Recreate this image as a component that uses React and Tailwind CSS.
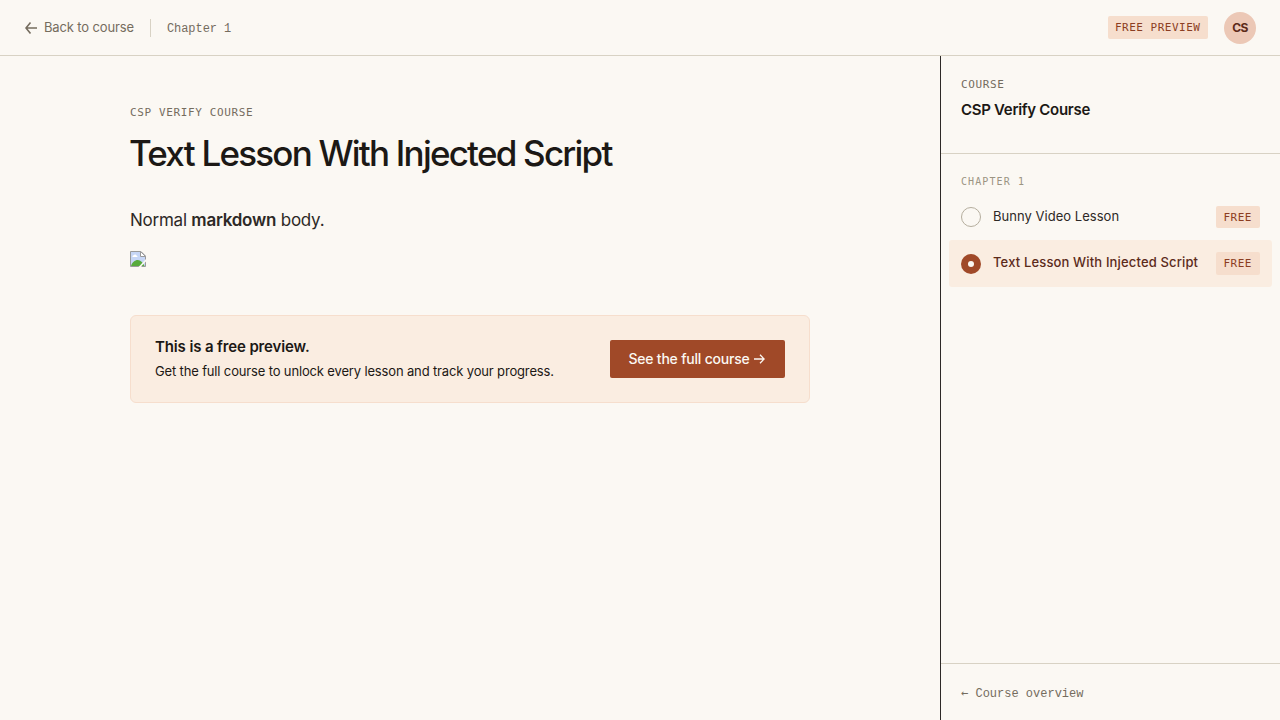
import clsx from 'clsx'

const lessons = [
  { id: 1, title: 'Bunny Video Lesson', free: true },
  { id: 2, title: 'Text Lesson With Injected Script', free: true, current: true },
]

function ArrowLeft() {
  return (
    <svg width="12" height="12" viewBox="0 0 12 12" fill="none" stroke="currentColor" strokeWidth="1.6" className="shrink-0">
      <path d="M12 6H1M5.500.6 1 6l4.500 5.400" />
    </svg>
  )
}

function ArrowRight() {
  return (
    <svg width="11" height="10" viewBox="0 0 11 10" fill="none" stroke="currentColor" strokeWidth="1.3" className="shrink-0">
      <path d="M0 5h10M6 .8 10.2 5 6 9.2" />
    </svg>
  )
}

function MissingImage() {
  return (
    <svg width="16" height="16" viewBox="0 0 16 16" className="block">
      <path d="M.5.5h10.500l4.500 4.500v10.500H.5z" fill="#c6d6f6" stroke="#9a9a9a" />
      <path d="M2.500 6a1.300 1.300 0 0 1 1.200-1.700 1.700 1.700 0 0 1 3 .5A1 1 0 0 1 7.500 6z" fill="#fff" />
      <path d="M1 15c1-3.500 3.800-6 6.800-6 2.700 0 5.200 2.500 6.700 6z" fill="#58ab3c" />
      <path d="M10.500.5v5h5z" fill="#fff" stroke="#9a9a9a" />
      <path d="M16 8v2.500L11.500 15v1H8.500z" fill="#fbf8f3" />
    </svg>
  )
}

function FreeBadge({ children, className }) {
  return (
    <span className={clsx('flex shrink-0 items-center rounded-[2px] bg-[#f6decd] font-[DejaVu_Sans_Mono,monospace] text-[11px] text-[#8b3d22]', className)}>
      {children}
    </span>
  )
}

function LessonRow({ lesson }) {
  return (
    <li className={clsx('flex h-[47px] items-center rounded-[3px] px-3', lesson.current && 'bg-[#faede1]')}>
      <span
        className={clsx(
          'mt-px flex size-5 shrink-0 items-center justify-center rounded-full',
          lesson.current ? 'bg-[#a04928]' : 'border border-[#b5ae9e]'
        )}
      >
        {lesson.current && <span className="size-1.5 rounded-full bg-[#fbf8f3]" />}
      </span>
      <span
        className={clsx(
          'ml-3 flex-1 text-[13px] whitespace-nowrap',
          lesson.current ? 'pb-px font-medium tracking-[0.15px] text-[#5c2a1a]' : 'tracking-[0.03px] text-[#2d2926]'
        )}
      >
        {lesson.title}
      </span>
      {lesson.free && (
        <FreeBadge className={clsx('w-11 pl-[7.5px] tracking-[0.5px]', lesson.current ? 'h-[23px] pt-0.5' : 'h-[22px] pt-[3px]')}>FREE</FreeBadge>
      )}
    </li>
  )
}

export default function App() {
  return (
    <div className="flex h-screen flex-col overflow-hidden bg-[#fbf8f3] font-[Inter,sans-serif] text-[#1c1815]">
      <header className="flex h-14 shrink-0 items-center justify-between border-b border-[#d8d2c4] px-6">
        <div className="flex items-center text-[#756c5e]">
          <a href="#" className="flex items-center gap-[7px] pl-px text-[13px] tracking-[-0.14px]">
            <ArrowLeft />
            <span>Back to course</span>
          </a>
          <span className="mx-4 h-[18px] w-px bg-[#d8d2c4]" />
          <span className="pt-0.5 font-[Liberation_Mono,monospace] text-xs tracking-[-0.05px]">Chapter 1</span>
        </div>
        <div className="flex items-center gap-4">
          <FreeBadge className="h-[23px] w-[100px] pt-0.5 pl-[7px] tracking-[0.5px]">FREE PREVIEW</FreeBadge>
          <span className="flex size-8 items-center justify-center rounded-full bg-[#ecc8b6] text-xs font-bold tracking-[-0.6px] text-[#5c2a1a]">CS</span>
        </div>
      </header>

      <div className="flex min-h-0 flex-1">
        <main className="flex-1 pt-[49px]">
          <div className="mx-auto w-[680px]">
            <p className="font-[DejaVu_Sans_Mono,monospace] text-[11px] leading-4 tracking-[0.62px] text-[#756c5e]">CSP VERIFY COURSE</p>
            <h1 className="mt-2.5 -ml-px text-[35px] leading-[44px] font-medium tracking-[-1.78px] whitespace-nowrap">Text Lesson With Injected Script</h1>
            <p className="mt-8 text-[17px] leading-[26px] tracking-[-0.24px] text-[#2d2926]">
              Normal <strong className="font-semibold">markdown</strong> body.
            </p>
            <div className="mt-[18px]">
              <MissingImage />
            </div>

            <section className="mt-12 flex h-[88px] items-center justify-between rounded-md border border-[#f6decd] bg-[#faede1] px-6">
              <div>
                <p className="text-[15px] leading-6 font-semibold tracking-[-0.13px]">This is a free preview.</p>
                <p className="mt-0.5 mb-0.5 text-[13px] leading-5 tracking-[-0.15px]">Get the full course to unlock every lesson and track your progress.</p>
              </div>
              <button className="flex h-[38px] w-[175px] items-center justify-center gap-1 rounded-[2px] bg-[#a04928] pr-0.5 text-sm font-medium tracking-[-0.2px] whitespace-nowrap text-[#fbf8f3]">
                <span>See the full course</span>
                <ArrowRight />
              </button>
            </section>
          </div>
        </main>

        <aside className="flex w-[340px] shrink-0 flex-col border-l border-[#2d2926]">
          <div className="h-[98px] border-b border-[#d8d2c4] px-5 pt-[21px]">
            <p className="font-[DejaVu_Sans_Mono,monospace] text-[11px] leading-4 tracking-[0.62px] text-[#756c5e]">COURSE</p>
            <p className="mt-[5px] text-[15px] leading-6 font-semibold tracking-[-0.3px]">CSP Verify Course</p>
          </div>
          <div className="flex-1 pt-5">
            <p className="px-5 font-[DejaVu_Sans_Mono,monospace] text-[10px] leading-4 tracking-[1.1px] text-[#9c9482]">CHAPTER 1</p>
            <ul className="mt-[3px] px-2">
              {lessons.map((lesson) => (
                <LessonRow key={lesson.id} lesson={lesson} />
              ))}
            </ul>
          </div>
          <footer className="flex h-[57px] items-center border-t border-[#d8d2c4] px-5 pt-[3px]">
            <a href="#" className="font-[Liberation_Mono,monospace] text-xs text-[#756c5e]">
              <span className="font-[DejaVu_Sans_Mono,monospace] leading-none">←</span> Course overview
            </a>
          </footer>
        </aside>
      </div>
    </div>
  )
}
